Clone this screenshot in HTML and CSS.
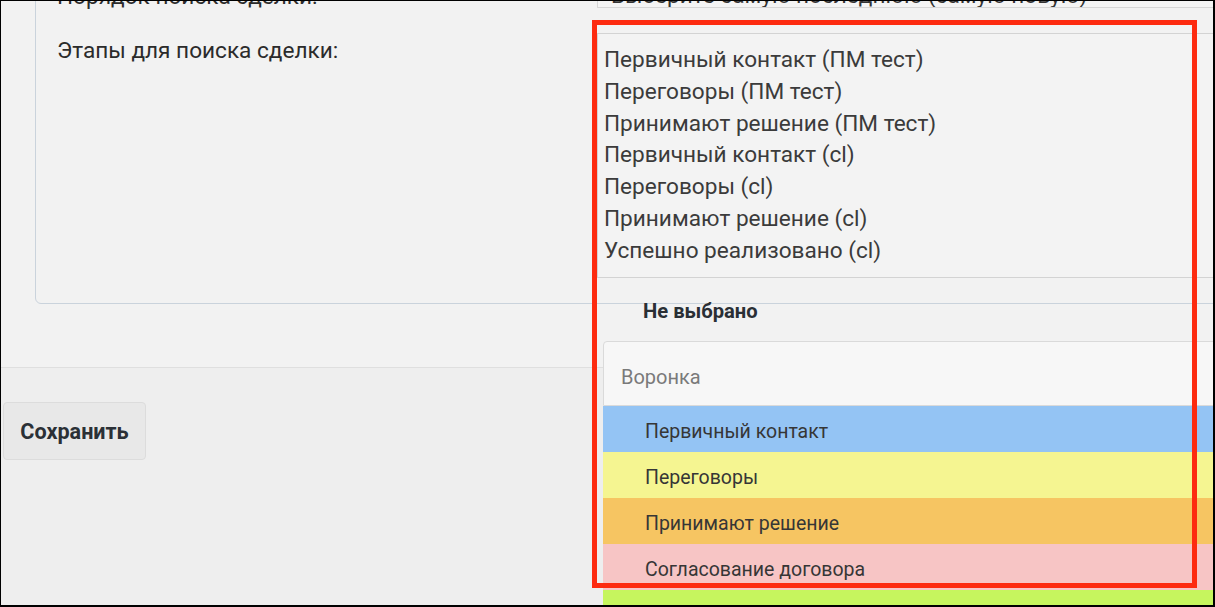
FILE: index.html
```html
<!DOCTYPE html>
<html lang="ru">
<head>
<meta charset="utf-8">
<title>Этапы для поиска сделки</title>
<link rel="stylesheet" href="styles.css">
</head>
<body>
<div class="screen">
  <section class="settings">
    <div class="panel">
      <div class="row row-order">
        <div class="label label-order">Порядок поиска сделки:</div>
        <div class="field">
          <div class="select">Выберите самую последнюю (самую новую)</div>
        </div>
      </div>
      <div class="row row-stages">
        <div class="label label-stages">Этапы для поиска сделки:</div>
        <div class="field">
          <div class="multiselect">
            <div class="ms-item">Первичный контакт (ПМ тест)</div>
            <div class="ms-item">Переговоры (ПМ тест)</div>
            <div class="ms-item">Принимают решение (ПМ тест)</div>
            <div class="ms-item">Первичный контакт (cl)</div>
            <div class="ms-item">Переговоры (cl)</div>
            <div class="ms-item">Принимают решение (cl)</div>
            <div class="ms-item">Успешно реализовано (cl)</div>
          </div>
        </div>
      </div>
    </div>
  </section>
  <footer class="actions">
    <button class="btn" type="button">Сохранить</button>
  </footer>

  <div class="dropdown">
    <div class="dd-head">Не выбрано</div>
    <div class="dd-search">Воронка</div>
    <div class="dd-opt opt-blue">Первичный контакт</div>
    <div class="dd-opt opt-yellow">Переговоры</div>
    <div class="dd-opt opt-orange">Принимают решение</div>
    <div class="dd-opt opt-pink">Согласование договора</div>
    <div class="dd-opt opt-green"></div>
  </div>

  <div class="highlight"></div>
</div>
</body>
</html>
```

FILE: styles.css
```css
html, body {
  margin: 0;
  padding: 0;
  background: #000;
}

.screen {
  position: relative;
  width: 1212px;
  height: 604px;
  margin: 1px 2px 2px 1px;
  overflow: hidden;
  background: #f2f2f2;
  font-family: Roboto, "Noto Sans", sans-serif;
  color: #2e2e2e;
}

.settings {
  display: flow-root;
  height: 366px;
  border-bottom: 1px solid #dfdfdf;
  box-shadow: 0 1px 1px #e6e6e6;
}

.panel {
  margin: -46px -40px 0 34px;
  padding: 15px 0 25px 21px;
  border: 1px solid #cad3dc;
  border-radius: 6px;
  display: flex;
  flex-direction: column;
  gap: 25px;
}

.row {
  display: grid;
  grid-template-columns: 540px 1fr;
}

.label {
  font-size: 22.6px;
  color: #2b2b2b;
  white-space: nowrap;
}

.label-order {
  line-height: 20px;
  padding-top: 16px;
}

.label-stages {
  line-height: 28px;
  padding-top: 4px;
}

.select {
  box-sizing: border-box;
  height: 37px;
  padding: 14px 0 0 13px;
  line-height: 20px;
  border: 1px solid #d6d6d6;
  font-size: 22.6px;
  color: #333;
  background: #f4f4f4;
  white-space: nowrap;
  overflow: hidden;
}

.multiselect {
  border: 1px solid #d3d3d3;
  padding: 10px 0 10px 6px;
  background: #f3f3f3;
}

.ms-item {
  font-size: 22.6px;
  line-height: 31.8px;
  color: #3b3b3b;
  white-space: nowrap;
}

.actions {
  background: #eeeeee;
  height: 237px;
  padding: 34px 0 0 2px;
  box-sizing: border-box;
}

.btn {
  width: 143px;
  height: 58px;
  background: #e8e8e8;
  border: 1px solid #dcdcdc;
  border-radius: 4px;
  font-family: Roboto, "Noto Sans", sans-serif;
  font-weight: 700;
  font-size: 21.6px;
  color: #2b3036;
  padding: 0;
}

/* open popup of the stage picker, lying over the panel */
.dropdown {
  position: absolute;
  left: 602px;
  top: 290px;
  width: 640px;
}

.dd-head {
  height: 50px;
  line-height: 40px;
  padding-left: 40px;
  font-weight: 700;
  font-size: 20.2px;
  color: #2a2f35;
}

.dd-search {
  box-sizing: border-box;
  height: 65px;
  padding: 6px 0 0 17px;
  line-height: 58px;
  border: 1px solid #dadada;
  border-radius: 4px 0 0 0;
  background: #f7f7f7;
  font-size: 20px;
  color: #7a7a7a;
}

.dd-opt {
  box-sizing: border-box;
  height: 46px;
  padding: 6px 0 0 42px;
  line-height: 40px;
  font-size: 19.5px;
  color: #363636;
}

.opt-blue { background: #94c4f4; }
.opt-yellow { background: #f5f591; }
.opt-orange { background: #f6c562; }
.opt-pink { background: #f7c5c5; }
.opt-green { background: #c6f55e; }

/* red annotation frame drawn on top of the screenshot */
.highlight {
  position: absolute;
  left: 591px;
  top: 19px;
  width: 605px;
  height: 568px;
  box-sizing: border-box;
  border: 5px solid #fd2b10;
}
```
